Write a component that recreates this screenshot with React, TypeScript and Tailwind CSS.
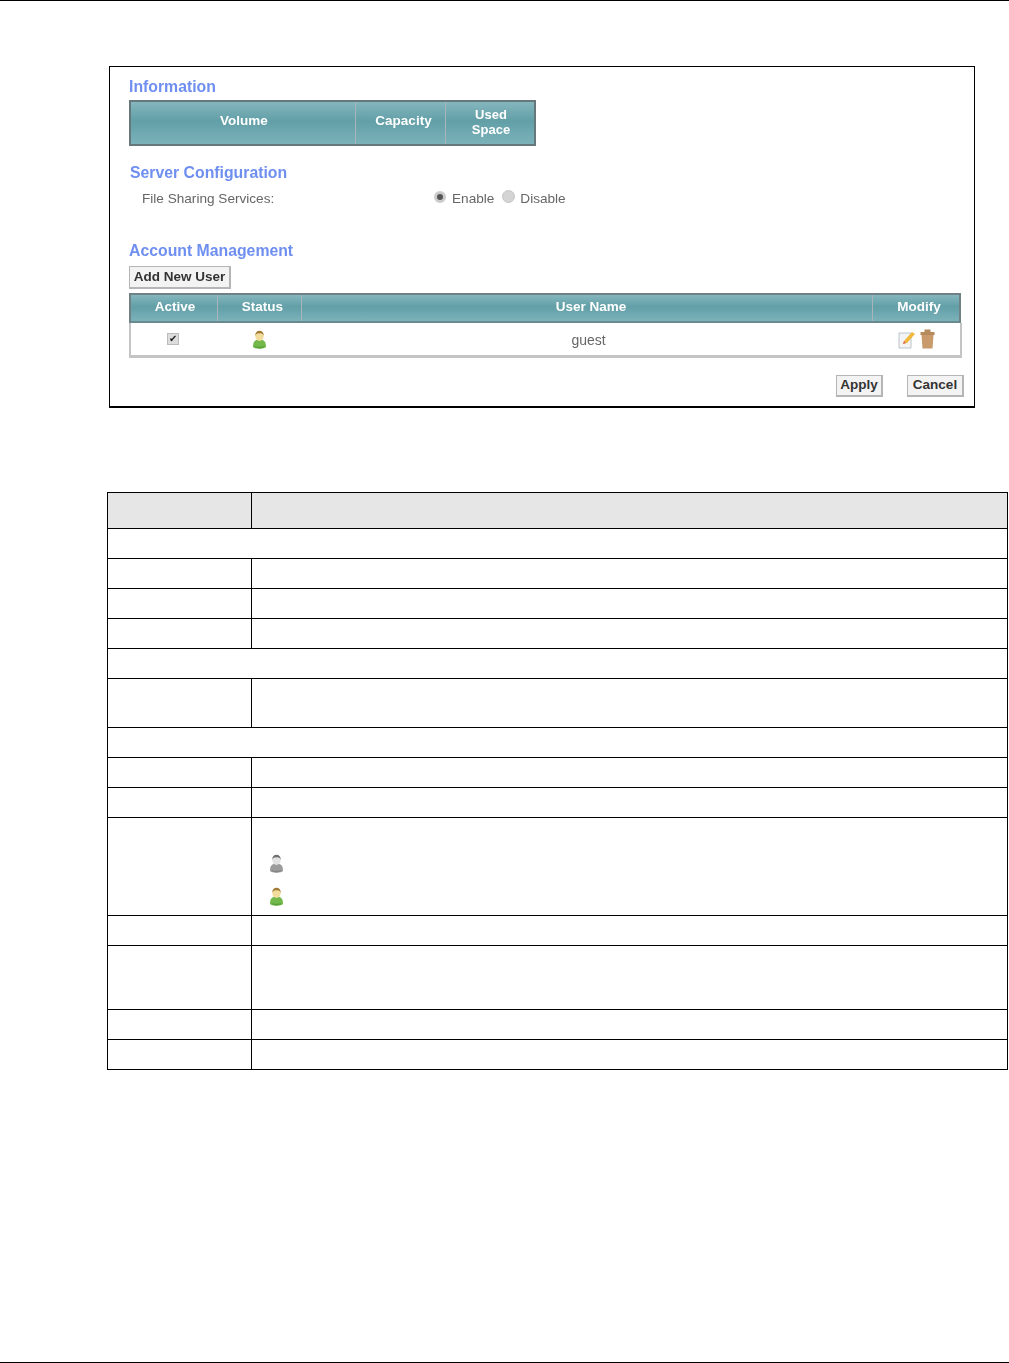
const F = "font-['Liberation_Sans',Arial,sans-serif]";

function UserIcon({ green, className }: { green?: boolean; className?: string }) {
  return (
    <svg width="15" height="19" viewBox="0 0 15 19" className={className}>
      <path d="M1 16.5C1 12 3 9.5 7.5 9.5S14 12 14 16.5C14 19.4 1 19.4 1 16.5z" fill={green ? "#72b84a" : "#9c9c9c"} />
      <path d="M3 16.5c2 1.4 7 1.4 9 0" stroke={green ? "#58a03a" : "#858585"} strokeWidth="1.5" fill="none" />
      <ellipse cx="7.5" cy="6" rx="4.2" ry="5" fill={green ? "#f2dc9c" : "#e2e2e2"} />
      <path d="M3.2 6C2.8 -1 12.2 -1 11.8 6 11.3 4.2 10 3.2 7.5 3.4 5 3.2 3.7 4.2 3.2 6z" fill={green ? "#a07a34" : "#6e6e6e"} />
    </svg>
  );
}

function Heading({ children, className }: { children: React.ReactNode; className?: string }) {
  return <div className={`text-[15.8px] leading-[18px] font-bold text-[#6f8ff0] ${className ?? ""}`}>{children}</div>;
}

function Th({ children, className }: { children: React.ReactNode; className?: string }) {
  return (
    <div className={`flex items-center justify-center text-center font-bold text-white border-r border-[#a9b4bc] last:border-r-0 ${className ?? ""}`}>
      {children}
    </div>
  );
}

const teal = "bg-[linear-gradient(#85b6bd,#629fa7_45%,#7cb2ba)]";

function Btn({ children, className }: { children: React.ReactNode; className?: string }) {
  return (
    <div className={`flex items-center justify-center bg-[#f3f3f3] border border-[#b5b5b5] border-b-2 border-r-2 text-[13.5px] font-bold text-[#333] ${className ?? ""}`}>
      {children}
    </div>
  );
}

function Row({ h, section }: { h: number; section?: boolean }) {
  return (
    <div className="flex border-b border-black" style={{ height: h }}>
      {section ? <div className="flex-1" /> : (
        <>
          <div className="w-[144px] border-r border-black" />
          <div className="flex-1" />
        </>
      )}
    </div>
  );
}

export default function App() {
  return (
    <div className={`relative w-[1009px] h-[1363px] bg-white overflow-hidden ${F}`}>
      <div className="h-px bg-black" />

      <div className="ml-[109px] mt-[65px] w-[866px] h-[342px] border border-black border-b-2">
        <div className="h-full pl-[19px] pr-[12px] pt-[11px] text-[#555] text-[14px] blur-[0.5px]">
          <Heading>Information</Heading>
          <div className={`mt-[4px] w-[407px] h-[46px] flex border-2 border-[#66787b] text-[13.5px] ${teal}`}>
            <Th className="w-[225px] pl-[2px] pb-[3px]">Volume</Th>
            <Th className="w-[90px] pl-[6px] pb-[3px]">Capacity</Th>
            <Th className="flex-1 pl-[2px] pb-[3px] text-[13px] leading-[15px]">Used<br />Space</Th>
          </div>

          <Heading className="mt-[18px] ml-[1px]">Server Configuration</Heading>
          <div className="mt-[8px] flex items-center h-[18px] text-[13.6px] text-[#666]">
            <span className="ml-[13px] w-[292px]">File Sharing Services:</span>
            <span className="w-[12px] h-[12px] -mt-[4px] rounded-full border-[3px] border-[#ccc] bg-[#555]" />
            <span className="ml-[6px]">Enable</span>
            <span className="ml-[8px] w-[13px] h-[13px] -mt-[5px] rounded-full bg-[#d4d4d4] border border-[#c4c4c4]" />
            <span className="ml-[5px]">Disable</span>
          </div>

          <Heading className="mt-[34px]">Account Management</Heading>
          <Btn className="mt-[6px] w-[102px] h-[23px]">Add New User</Btn>

          <div className={`mt-[4px] w-[832px] h-[30px] flex border-2 border-[#6f8184] border-b-[#6b8a90] text-[13.5px] ${teal}`}>
            <Th className="w-[87px] pl-[2px] pb-[1px]">Active</Th>
            <Th className="w-[84px] pl-[6px] pb-[1px]">Status</Th>
            <Th className="flex-1 pl-[8px] pb-[1px]">User Name</Th>
            <Th className="w-[86px] pl-[6px] pb-[1px]">Modify</Th>
          </div>
          <div className="w-[833px] h-[35px] flex items-center border-x-2 border-b-[3px] border-[#c4c4c4] text-[14px] text-[#666]">
            <div className="w-[83px] flex justify-center">
              <span className="flex items-center justify-center w-[12px] h-[12px] bg-[#ddd] border border-[#bbb] text-[10px] leading-none text-[#222]">✔</span>
            </div>
            <div className="w-[87px] flex justify-center pl-[3px]"><UserIcon green /></div>
            <div className="flex-1 flex justify-center pl-[2px] pt-[2px]">guest</div>
            <div className="w-[86px] flex justify-center items-center gap-[4px] pr-[1px]">
              <svg width="18" height="19" viewBox="0 0 18 19">
                <path d="M1 3h12v15H1z" fill="#f4f4f4" stroke="#b8c4cc" />
                <path d="M5 14l1-3 8-9 3 2-8 9z" fill="#f0b93c" />
                <path d="M5 14l1-3 2 2z" fill="#d9626a" />
              </svg>
              <svg width="15" height="20" viewBox="0 0 15 20">
                <path d="M0.5 3h14v3H0.5zM4.5 0.5h6V3h-6z" fill="#b58a5c" />
                <path d="M1.5 6h12l-1 13.5h-10z" fill="#c89a6c" />
              </svg>
            </div>
          </div>

          <div className="mt-[17px] w-[835px] flex justify-end gap-[24px]">
            <Btn className="w-[47px] h-[22px] text-[13.5px]">Apply</Btn>
            <Btn className="w-[57px] h-[22px] text-[13.5px]">Cancel</Btn>
          </div>
        </div>
      </div>

      <div className="ml-[107px] mt-[84px] w-[901px] border-t border-x border-black">
        <div className="flex h-[36px] bg-[#e6e6e6] border-b border-black">
          <div className="w-[144px] border-r border-black" />
          <div className="flex-1" />
        </div>
        <Row h={30} section />
        <Row h={30} />
        <Row h={30} />
        <Row h={30} />
        <Row h={30} section />
        <Row h={49} />
        <Row h={30} section />
        <Row h={30} />
        <Row h={30} />
        <div className="flex h-[98px] border-b border-black">
          <div className="w-[144px] border-r border-black" />
          <div className="flex-1 flex flex-col pl-[17px] pt-[36px] gap-[14px] blur-[0.3px]">
            <UserIcon />
            <UserIcon green />
          </div>
        </div>
        <Row h={30} />
        <Row h={64} />
        <Row h={30} />
        <Row h={30} />
      </div>

      <div className="absolute left-0 right-0 bottom-0 h-px bg-black" />
    </div>
  );
}
